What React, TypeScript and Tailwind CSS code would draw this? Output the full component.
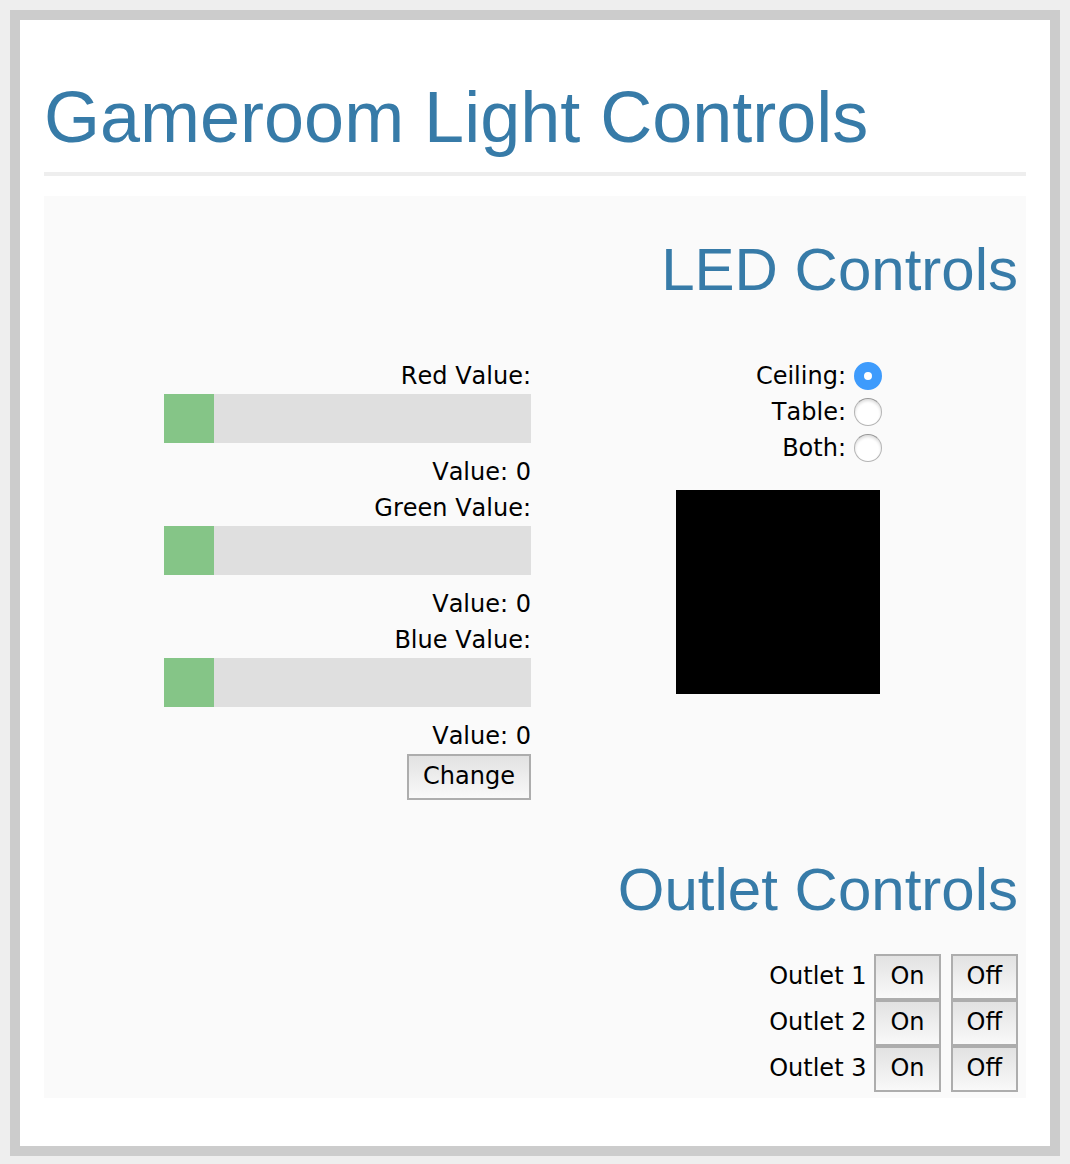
import { useState } from "react";

const buttonClass =
  "h-[46px] border-2 border-[#adadad] bg-linear-to-b from-[#e2e2e2] to-[#f9f9f9] px-[14px] pb-[2px] text-center";

const sectionTitleClass = "font-['Liberation_Sans',sans-serif] text-[60px] leading-[70px] text-[#377ba8]";

function Slider({ name, value, onChange }: { name: string; value: number; onChange: (v: number) => void }) {
  const id = name.toLowerCase();
  return (
    <div className="flex flex-col items-end">
      <label htmlFor={id}>{name} Value:</label>
      <input
        id={id}
        type="range"
        min={0}
        max={255}
        value={value}
        onChange={(e) => onChange(Number(e.target.value))}
        className="mb-[11px] block h-[49px] w-full appearance-none bg-[#dfdfdf] [&::-webkit-slider-thumb]:h-[49px] [&::-webkit-slider-thumb]:w-[50px] [&::-webkit-slider-thumb]:appearance-none [&::-webkit-slider-thumb]:bg-[#85c587]"
      />
      <output htmlFor={id}>Value: {value}</output>
    </div>
  );
}

export default function App() {
  const [rgb, setRgb] = useState([0, 0, 0]);
  const [target, setTarget] = useState("Ceiling");
  return (
    <div className="bg-[#eeeeee] p-[10px] pb-2 font-['DejaVu_Sans',sans-serif] text-[24px] leading-[36px] text-black [font-kerning:none]">
      <main className="border-[10px] border-[#cccccc] bg-white px-6 pt-[60px] pb-12">
        <h1 className="border-b-4 border-[#eeeeee] pb-[18px] font-['Liberation_Sans',sans-serif] text-[72px] leading-[74px] text-[#377ba8]">
          Gameroom Light Controls
        </h1>
        <div className="mt-5 bg-[#fafafa] pt-[39px] pr-2 pb-[6px] text-right">
          <h2 className={sectionTitleClass}>LED Controls</h2>
          <div className="mt-[53px] grid grid-cols-2">
            <div className="pl-[120px]">
              {["Red", "Green", "Blue"].map((name, i) => (
                <Slider
                  key={name}
                  name={name}
                  value={rgb[i]}
                  onChange={(v) => setRgb(rgb.map((old, j) => (j === i ? v : old)))}
                />
              ))}
              <button type="button" className={buttonClass}>Change</button>
            </div>
            <div className="flex flex-col items-end pr-[136px]">
              {["Ceiling", "Table", "Both"].map((name) => (
                <label key={name} className="flex items-center gap-2">
                  {name}:
                  <input
                    type="radio"
                    name="target"
                    checked={target === name}
                    onChange={() => setTarget(name)}
                    className="size-7 appearance-none rounded-full border border-[#b4b4b4] border-t-[#989898] bg-white shadow-[inset_0_2px_3px_#dddddd] checked:border-[10px] checked:border-[#3e9bfc] checked:shadow-none"
                  />
                </label>
              ))}
              <div className="mt-6 mr-[2px] size-[204px]" style={{ backgroundColor: `rgb(${rgb.join(",")})` }} />
            </div>
          </div>
          <h2 className={`${sectionTitleClass} mt-[55px]`}>Outlet Controls</h2>
          <div className="mt-[29px]">
            {[1, 2, 3].map((n) => (
              <div key={n} className="flex items-center justify-end">
                <span className="mr-2 pb-[2px]">Outlet {n}</span>
                <button type="button" className={`${buttonClass} mr-[10px]`} aria-label={`Outlet ${n} On`}>On</button>
                <button type="button" className={buttonClass} aria-label={`Outlet ${n} Off`}>Off</button>
              </div>
            ))}
          </div>
        </div>
      </main>
    </div>
  );
}
